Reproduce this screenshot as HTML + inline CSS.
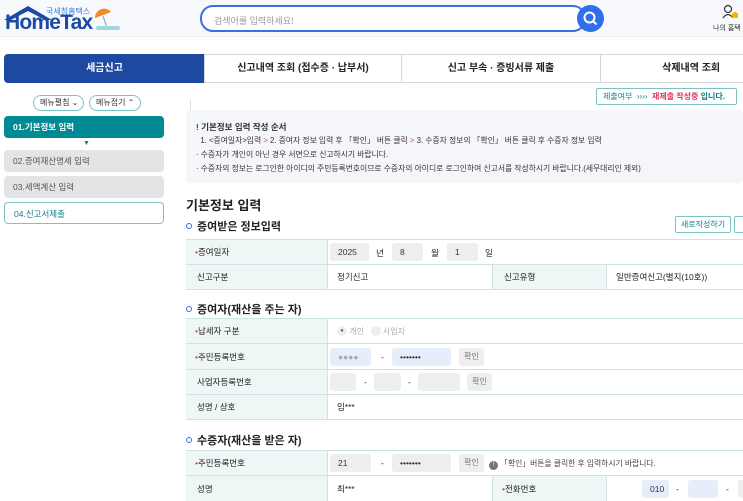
<!DOCTYPE html>
<html><head><meta charset="utf-8"><style>
*{margin:0;padding:0;box-sizing:border-box}
body{width:743px;height:497px;overflow:hidden;background:#fff;font-family:"Liberation Sans","Noto Sans CJK KR",sans-serif;color:#222;position:relative;font-size:9px}
.a{position:absolute}
.hdr{left:0;top:0;width:743px;height:37px;background:#f8f9fc;border-bottom:1px solid #eceef2}
.search{left:200px;top:5px;width:386px;height:27px;border:2px solid #3a6fe0;border-radius:13px;background:#fff;color:#999;font-size:9px;padding:7px 12px}
.sbtn{left:577px;top:5px;width:27px;height:27px;border-radius:50%;background:#2f6fe8}
.tab{top:54px;height:29px;border:1px solid #d8d8d8;font-size:10px;font-weight:bold;text-align:center;line-height:27px;background:#fff;color:#222}
.mb{top:95px;height:16px;border:1px solid #7cc4c4;border-radius:8px;font-size:8px;color:#333;line-height:14px;padding-left:6px;background:#fff}
.step{left:4px;width:160px;height:22px;border-radius:4px;font-size:8.5px;line-height:22px;padding-left:9px}
.lab{background:#eef6f6;border-right:1px solid #cfe3e3}
.row{left:186px;width:557px;border-top:1px solid #cfe3e3;font-size:8.5px}
.cell{position:absolute;top:0;height:100%;display:flex;align-items:center;padding-left:9px}
.in{position:absolute;height:18px;border-radius:3px;background:#eeeeee;font-size:8.5px;line-height:18px;padding-left:8px;color:#333}
.st{color:#e0365a}
.h2{font-size:11px;font-weight:bold;left:186px}
.dot{display:inline-block;width:6px;height:6px;border:1.5px solid #3a6fe0;border-radius:50%;margin-right:5px;vertical-align:1px}
.ok{position:absolute;height:18px;background:#eee;border-radius:3px;font-size:8px;color:#777;line-height:18px;width:25px;text-align:center}
</style></head><body>
<div class="a hdr"></div>
<svg class="a" style="left:4px;top:3px" width="60" height="20"><path d="M0 17 L24 3 L48 17 L41 17 L24 8 L7 17Z" fill="#1d4aa0"/></svg>
<div class="a" style="left:5px;top:13px;font-size:21px;font-weight:bold;color:#1d4aa0;letter-spacing:-0.8px;line-height:20px">HomeTax</div>
<div class="a" style="left:46px;top:6px;font-size:8px;color:#2e7fd8">국세청홈택스</div>
<svg class="a" style="left:93px;top:8px" width="30" height="24"><path d="M2 10 A9 9 0 0 1 18 4 Z" fill="#f08a24"/><line x1="10" y1="8" x2="14" y2="20" stroke="#999"/><rect x="3" y="18" width="24" height="4" rx="2" fill="#9fd6e0"/></svg>
<div class="a search">검색어를 입력하세요!</div>
<div class="a sbtn"><svg width="27" height="27"><circle cx="12.5" cy="12.5" r="5" fill="none" stroke="#fff" stroke-width="2"/><line x1="16" y1="16" x2="19.5" y2="19.5" stroke="#fff" stroke-width="2"/></svg></div>
<svg class="a" style="left:722px;top:4px" width="18" height="16"><circle cx="6" cy="5" r="3.5" fill="none" stroke="#333" stroke-width="1.2"/><path d="M1 14 Q6 7 11 14" fill="none" stroke="#333" stroke-width="1.2"/><path d="M10 14 L10 10 Q13 6 16 10 L16 14Z" fill="#f2b705"/></svg>
<div class="a" style="left:713px;top:23px;font-size:7px;color:#333">나의 홈택</div>
<div class="a tab" style="left:4px;width:201px;background:#1d4aa0;color:#fff;border-color:#1d4aa0;border-radius:4px 0 0 4px">세금신고</div>
<div class="a tab" style="left:204px;width:198px">신고내역 조회 (접수증 · 납부서)</div>
<div class="a tab" style="left:401px;width:200px">신고 부속 · 증빙서류 제출</div>
<div class="a tab" style="left:600px;width:160px">&nbsp;&nbsp;&nbsp;&nbsp;&nbsp;&nbsp;&nbsp;&nbsp;삭제내역 조회</div>
<div class="a mb" style="left:33px;width:51px">메뉴펼침 ⌄</div>
<div class="a mb" style="left:89px;width:52px">메뉴접기 ⌃</div>
<div class="a step" style="top:116px;background:#008a93;color:#fff;font-weight:bold">01.기본정보 입력</div>
<div class="a" style="left:83px;top:140px;font-size:7px;color:#008a93">▼</div>
<div class="a step" style="top:150px;background:#e4e4e4;color:#555">02.증여재산명세 입력</div>
<div class="a step" style="top:176px;background:#e4e4e4;color:#555">03.세액계산 입력</div>
<div class="a step" style="top:202px;background:#fff;border:1px solid #7cc4c4;color:#0a7f8a">04.신고서제출</div>
<div class="a" style="left:190px;top:100px;width:1px;height:10px;background:#ddd"></div>
<div class="a" style="left:596px;top:88px;width:141px;height:17px;border:1px solid #7cc4c4;border-radius:2px;font-size:8px;line-height:15px;padding-left:6px;color:#0a7f8a">제출여부 &nbsp;›››› &nbsp;<b style="color:#e0365a">재제출 작성중</b> <b>입니다.</b></div>
<div class="a" style="left:186px;top:110px;width:557px;height:73px;background:#f4f6fa;border-radius:4px;font-size:7.8px;color:#333;line-height:14px;padding:10px 0 0 10px">
<div style="font-weight:bold;font-size:8.5px"><span style="color:#1d4aa0">!</span> 기본정보 입력 작성 순서</div>
<div>&nbsp;&nbsp;1. &lt;증여일자&gt;입력 <span class="st">&gt;</span> 2. 증여자 정보 입력 후 「확인」 버튼 클릭 <span class="st">&gt;</span> 3. 수증자 정보의 「확인」 버튼 클릭 후 수증자 정보 입력</div>
<div>· 수증자가 개인이 아닌 경우 서면으로 신고하시기 바랍니다.</div>
<div>· 수증자의 정보는 로그인한 아이디의 주민등록번호이므로 수증자의 아이디로 로그인하여 신고서를 작성하시기 바랍니다.(세무대리인 제외)</div></div>
<div class="a" style="left:186px;top:195px;font-size:13px;font-weight:bold">기본정보 입력</div>
<div class="a h2" style="top:218px"><span class="dot"></span>증여받은 정보입력</div>
<div class="a" style="left:675px;top:216px;width:56px;height:17px;border:1px solid #7cc4c4;border-radius:2px;font-size:8px;line-height:15px;text-align:center;color:#0a7f8a">새로작성하기</div>
<div class="a" style="left:734px;top:216px;width:12px;height:17px;border:1px solid #7cc4c4;border-radius:2px"></div>

<div class="a row" style="top:239px;height:25px"><div class="cell lab" style="left:0;width:142px"><span class="st">•</span>증여일자</div>
<div class="in" style="left:144px;top:3px;width:39px">2025</div><span class="a" style="left:190px;top:7px">년</span>
<div class="in" style="left:206px;top:3px;width:31px">8</div><span class="a" style="left:245px;top:7px">월</span>
<div class="in" style="left:261px;top:3px;width:31px">1</div><span class="a" style="left:299px;top:7px">일</span></div>
<div class="a row" style="top:264px;height:26px;border-bottom:1px solid #cfe3e3"><div class="cell lab" style="left:0;width:142px;padding-left:11px">신고구분</div>
<div class="cell" style="left:142px;width:165px;border-right:1px solid #cfe3e3">정기신고</div>
<div class="cell lab" style="left:307px;width:114px;padding-left:11px">신고유형</div>
<div class="cell" style="left:421px">일반증여신고(별지(10호))</div></div>

<div class="a h2" style="top:301px"><span class="dot"></span>증여자(재산을 주는 자)</div>
<div class="a row" style="top:318px;height:25px"><div class="cell lab" style="left:0;width:142px"><span class="st">•</span>납세자 구분</div>
<div class="cell" style="left:142px;color:#aaa;font-size:8px"><span style="display:inline-block;width:10px;height:10px;border-radius:50%;background:#eee;text-align:center;line-height:10px;color:#666;font-size:6px">●</span>&nbsp;개인 &nbsp;&nbsp;<span style="display:inline-block;width:10px;height:10px;border-radius:50%;background:#eee"></span>&nbsp;사업자</div></div>
<div class="a row" style="top:343px;height:26px"><div class="cell lab" style="left:0;width:142px"><span class="st">•</span>주민등록번호</div>
<div class="in" style="left:144px;top:4px;width:41px;background:#e6eefb;color:#aaa">●●●●</div><span class="a" style="left:195px;top:8px">-</span>
<div class="in" style="left:206px;top:4px;width:59px;background:#e6eefb">•••••••</div><div class="ok" style="left:273px;top:4px">확인</div></div>
<div class="a row" style="top:369px;height:25px"><div class="cell lab" style="left:0;width:142px;padding-left:11px">사업자등록번호</div>
<div class="in" style="left:144px;top:3px;width:26px"></div><span class="a" style="left:178px;top:7px">-</span>
<div class="in" style="left:188px;top:3px;width:27px"></div><span class="a" style="left:222px;top:7px">-</span>
<div class="in" style="left:232px;top:3px;width:42px"></div><div class="ok" style="left:281px;top:3px">확인</div></div>
<div class="a row" style="top:394px;height:26px;border-bottom:1px solid #cfe3e3"><div class="cell lab" style="left:0;width:142px;padding-left:11px">성명 / 상호</div><div class="cell" style="left:142px">임***</div></div>

<div class="a h2" style="top:432px"><span class="dot"></span>수증자(재산을 받은 자)</div>
<div class="a row" style="top:450px;height:25px"><div class="cell lab" style="left:0;width:142px"><span class="st">•</span>주민등록번호</div>
<div class="in" style="left:144px;top:3px;width:41px">21</div><span class="a" style="left:195px;top:7px">-</span>
<div class="in" style="left:206px;top:3px;width:59px">•••••••</div><div class="ok" style="left:273px;top:3px">확인</div>
<span class="a" style="left:303px;top:7px;font-size:7.8px;color:#444"><span style="display:inline-block;width:9px;height:9px;border-radius:50%;background:#777;color:#fff;font-size:6px;text-align:center;line-height:9px">!</span> 「확인」버튼을 클릭한 후 입력하시기 바랍니다.</span></div>
<div class="a row" style="top:475px;height:26px"><div class="cell lab" style="left:0;width:142px;padding-left:11px">성명</div>
<div class="cell" style="left:142px;width:165px;border-right:1px solid #cfe3e3">최***</div>
<div class="cell lab" style="left:307px;width:114px"><span class="st">•</span>전화번호</div>
<div class="in" style="left:456px;top:4px;width:27px;background:#e6eefb">010</div><span class="a" style="left:490px;top:8px">-</span>
<div class="in" style="left:502px;top:4px;width:30px;background:#e6eefb"></div><span class="a" style="left:540px;top:8px">-</span>
<div class="in" style="left:552px;top:4px;width:10px"></div></div>
</body></html>
